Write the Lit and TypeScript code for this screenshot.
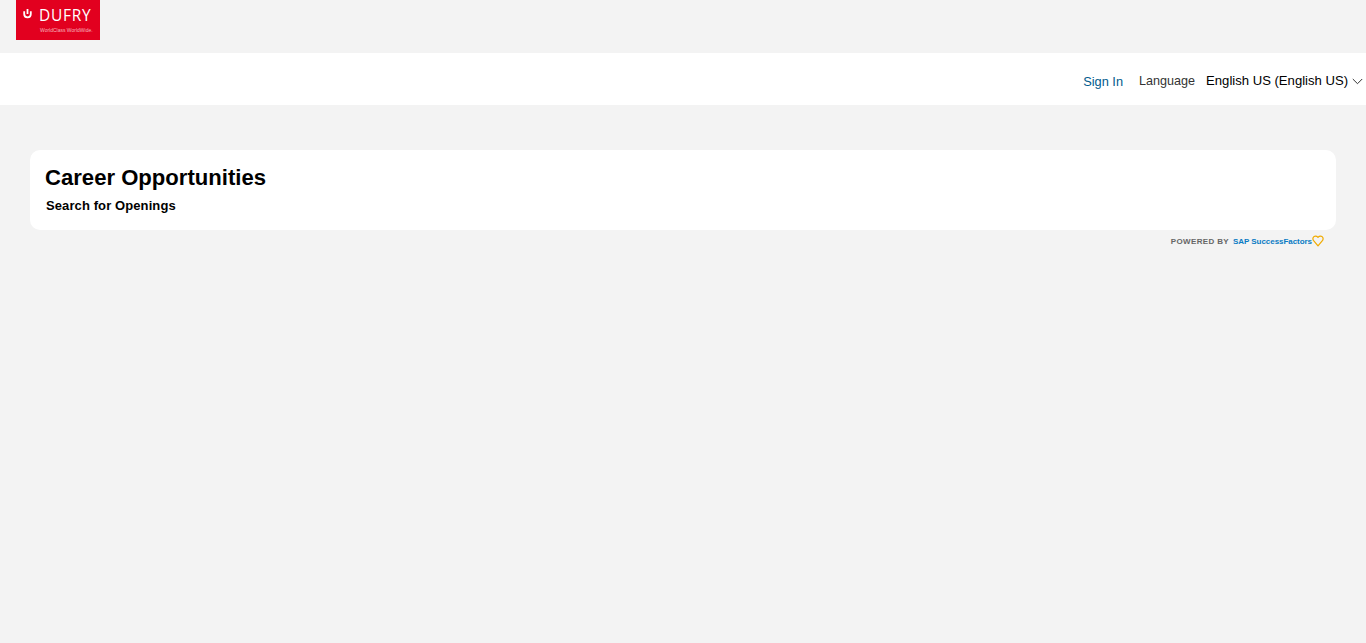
import { LitElement, html, css } from "lit";
import { customElement } from "lit/decorators.js";

@customElement("app-root")
export class AppRoot extends LitElement {
  static styles = css`
    :host { display: block; height: 643px; background: #f3f3f3; font-family: "Liberation Sans", Arial, sans-serif; overflow: hidden; }
    .top { height: 53px; padding-left: 16px; box-sizing: border-box; }
    .logo { width: 84px; height: 40px; background: #e2001f; color: #fff; display: flex; flex-direction: column; box-sizing: border-box; padding: 8px 0 0 6px; }
    .logo-row { display: flex; align-items: center; gap: 6px; height: 15px; }
    .logo-row svg { display: block; margin-top: -4px; }
    .dufry { font-size: 15.5px; letter-spacing: 0.7px; line-height: 15px; font-family: "Open Sans", sans-serif; font-weight: 400; }
    .tag { font-size: 5px; line-height: 6px; margin: 4px 0 0 18px; color: #f7b5bd; white-space: nowrap; }
    .nav { height: 52px; background: #fff; display: flex; justify-content: flex-end; align-items: center; padding: 4px 3px 0 0; box-sizing: border-box; font-size: 13px; }
    .signin { color: #005a8c; margin-right: 16px; font-size: 12.8px; }
    .lang { color: #333; margin-right: 11px; font-size: 12.6px; }
    .value { color: #000; margin-right: 4px; margin-bottom: 1px; font-size: 13.1px; }
    .nav svg { display: block; }
    .main { padding: 45px 30px 0; }
    .card { height: 80px; background: #fff; border-radius: 10px; box-sizing: border-box; padding: 14px 15px; }
    h1 { margin: 0; font-size: 22.1px; line-height: 27px; font-weight: 700; color: #000; }
    h2 { margin: 6px 0 0 1px; font-size: 13px; line-height: 17px; font-weight: 700; color: #000; letter-spacing: 0.1px; }
    .powered { display: flex; justify-content: flex-end; align-items: center; height: 14px; margin: 4px 12px 0 0; font-size: 8px; font-weight: 700; white-space: nowrap; }
    .by { color: #666; letter-spacing: 0.35px; margin-right: 4px; }
    .sf { color: #0a7bc4; letter-spacing: -0.05px; }
  `;

  render() {
    return html`
      <div class="top">
        <div class="logo">
          <div class="logo-row">
            <svg width="11" height="11" viewBox="0 0 11 11"><path d="M2.2 3.2V6C2.2 8 3.6 9.3 5.5 9.3S8.8 8 8.8 6V3.2" fill="none" stroke="#fff" stroke-width="1.8"/><rect x="4.6" y="1" width="1.8" height="5" fill="#fff"/></svg>
            <span class="dufry">DUFRY</span>
          </div>
          <div class="tag">WorldClass WorldWide.</div>
        </div>
      </div>
      <div class="nav">
        <span class="signin">Sign In</span>
        <span class="lang">Language</span>
        <span class="value">English US (English US)</span>
        <svg width="11" height="7" viewBox="0 0 11 7"><path d="M0.8 1L5.5 5.7L10.2 1" fill="none" stroke="#333" stroke-width="1"/></svg>
      </div>
      <div class="main">
        <div class="card">
          <h1>Career Opportunities</h1>
          <h2>Search for Openings</h2>
        </div>
        <div class="powered">
          <span class="by">POWERED BY</span>
          <span class="sf">SAP SuccessFactors</span>
          <svg width="12" height="12" viewBox="0 0 12 12"><path d="M6 10.8L1.4 5.4C0.2 3.2 1.4 1.2 3.4 1.2C4.6 1.2 5.5 1.8 6 2.4C6.5 1.8 7.4 1.2 8.6 1.2C10.6 1.2 11.8 3.2 10.6 5.4Z" fill="none" stroke="#f0ab00" stroke-width="1.2" stroke-linejoin="round"/></svg>
        </div>
      </div>
    `;
  }
}
